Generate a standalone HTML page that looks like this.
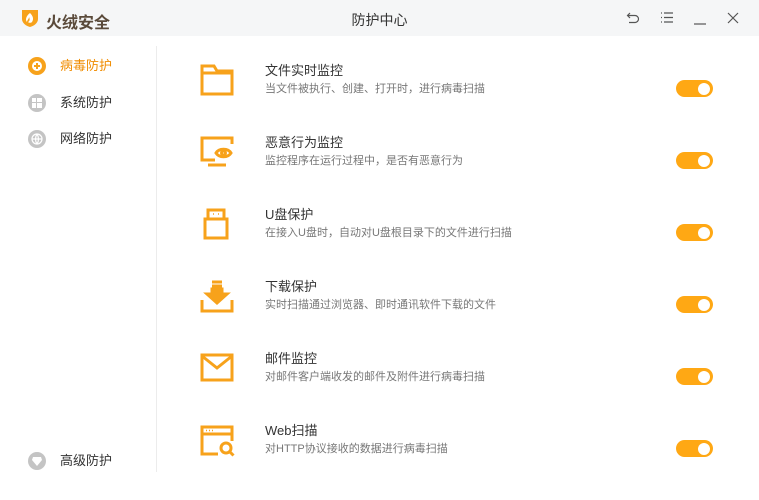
<!DOCTYPE html>
<html><head><meta charset="utf-8"><style>
*{margin:0;padding:0;box-sizing:border-box}
body{width:759px;height:500px;background:#fff;font-family:"Liberation Sans","Noto Sans CJK SC",sans-serif;position:relative;overflow:hidden;color:#333}
.top{position:absolute;left:0;top:0;width:759px;height:36px;background:#f5f6f7}
.logo{position:absolute;left:46px;top:9px;font-size:16px;font-weight:bold;color:#5a4a3a}
.title{position:absolute;left:0;width:759px;top:10px;text-align:center;font-size:14px;color:#333}
.ctl{position:absolute;top:10px}
.div{position:absolute;left:156px;top:46px;width:1px;height:426px;background:#ececec}
.nav{position:absolute;left:28px;font-size:13px;color:#333}
.nav .ic{position:absolute;left:0;top:0;width:18px;height:18px;border-radius:50%;background:#c4c4c4}
.nav span{position:absolute;left:32px;top:0;white-space:nowrap;line-height:18px}
.row{position:absolute;left:0;width:759px}
.row svg.i{position:absolute;left:198px;top:0}
.row .t{position:absolute;left:265px;top:-4px;font-size:13px;color:#333;white-space:nowrap}
.row .d{position:absolute;left:265px;top:16px;font-size:11px;color:#777;white-space:nowrap}
.tg{position:absolute;left:676px;top:16px;width:37px;height:17px;border-radius:9px;background:#ffa814}
.tg::after{content:"";position:absolute;right:3px;top:2.5px;width:12px;height:12px;border-radius:50%;background:#fff}
</style></head><body>
<div class="top">
<svg style="position:absolute;left:20px;top:8px" width="20" height="20" viewBox="0 0 20 20"><path d="M2 2h16v9c0 4-4 7-8 8-4-1-8-4-8-8z" fill="#f7a21b"/><path d="M10 5c3 3 4 6 2 9-1 1-3 1-4 0 2-1 2-3 1-5 0 2-2 3-2 5-2-2-1-6 3-9z" fill="#fff"/></svg>
<div class="logo">火绒安全</div>
<div class="title">防护中心</div>
<svg class="ctl" style="left:626px" width="14" height="16" viewBox="0 0 14 16" fill="none" stroke="#555" stroke-width="1.2"><path d="M4 3L1.5 5.5 4 8M1.5 5.5H9a3.5 3.5 0 010 7H3"/></svg>
<svg class="ctl" style="left:660px" width="14" height="16" viewBox="0 0 14 16" fill="none" stroke="#555" stroke-width="1.2"><path d="M1 3h1M4 3h9M1 7.5h1M4 7.5h9M1 12h1M4 12h9"/></svg>
<svg class="ctl" style="left:693px" width="14" height="16" viewBox="0 0 14 16" fill="none" stroke="#555" stroke-width="1.2"><path d="M1 14h12"/></svg>
<svg class="ctl" style="left:726px" width="14" height="16" viewBox="0 0 14 16" fill="none" stroke="#555" stroke-width="1.2"><path d="M2 3l10 10M12 3L2 13"/></svg>
</div>
<div class="div"></div>
<div class="nav" style="top:57px"><div class="ic" style="background:#f7a21b"></div><div style="position:absolute;left:4px;top:4px;width:10px;height:10px;border-radius:50%;background:#fff"></div><div style="position:absolute;left:6px;top:8.3px;width:6px;height:1.4px;background:#f7a21b"></div><div style="position:absolute;left:8.3px;top:6px;width:1.4px;height:6px;background:#f7a21b"></div><span style="color:#f08c00">病毒防护</span></div>
<div class="nav" style="top:94px"><div class="ic"></div><svg style="position:absolute;left:4px;top:4px" width="10" height="10"><rect x="0" y="0" width="4" height="4" fill="#fff"/><rect x="5" y="0" width="5" height="4" fill="#fff"/><rect x="0" y="5" width="4" height="5" fill="#fff"/><rect x="5" y="5" width="5" height="5" fill="#fff"/></svg><span>系统防护</span></div>
<div class="nav" style="top:130px"><div class="ic"></div><svg style="position:absolute;left:3px;top:3px" width="12" height="12" fill="none" stroke="#fff" stroke-width="1.2"><circle cx="6" cy="6" r="5"/><path d="M1 6h10M6 1c-2 3-2 7 0 10M6 1c2 3 2 7 0 10"/></svg><span>网络防护</span></div>
<div class="nav" style="top:452px"><div class="ic"></div><svg style="position:absolute;left:4px;top:5px" width="10" height="9"><path d="M1 0h8l1 3-5 6-5-6z" fill="#fff"/></svg><span>高级防护</span></div>

<div class="row" style="top:64px">
<svg class="i" width="38" height="32" viewBox="0 0 38 32" fill="none" stroke="#f7a21b" stroke-width="3"><path d="M4 2h12l3 5h15v23H4z M4 9h30"/></svg>
<div class="t">文件实时监控</div><div class="d">当文件被执行、创建、打开时，进行病毒扫描</div><div class="tg"></div></div>
<div class="row" style="top:136px">
<svg class="i" width="38" height="32" viewBox="0 0 38 32" fill="none" stroke="#f7a21b" stroke-width="3"><path d="M34 8V2H4v22h13M10 29h18"/><path d="M18 17c3-5 12-5 15 0-3 5-12 5-15 0z"/><circle cx="25.5" cy="17" r="2"/></svg>
<div class="t">恶意行为监控</div><div class="d">监控程序在运行过程中，是否有恶意行为</div><div class="tg"></div></div>
<div class="row" style="top:208px">
<svg class="i" width="38" height="32" viewBox="0 0 38 32" fill="none" stroke="#f7a21b" stroke-width="3"><path d="M10 2h16v9H10zM7 11h22v19H7z"/><path d="M15 6h1M20 6h1" stroke-width="1.5"/></svg>
<div class="t">U盘保护</div><div class="d">在接入U盘时，自动对U盘根目录下的文件进行扫描</div><div class="tg"></div></div>
<div class="row" style="top:280px">
<svg class="i" width="38" height="34" viewBox="0 0 38 34" fill="none" stroke="#f7a21b" stroke-width="3"><path d="M14 2h10M14 6h10M4 20v11h30V20"/><path d="M14 9h10v5h5l-10 9-10-9h5z" fill="#f7a21b"/></svg>
<div class="t">下载保护</div><div class="d">实时扫描通过浏览器、即时通讯软件下载的文件</div><div class="tg"></div></div>
<div class="row" style="top:352px">
<svg class="i" width="38" height="32" viewBox="0 0 38 32" fill="none" stroke="#f7a21b" stroke-width="3"><path d="M4 3h30v25H4zM4 4l15 12 15-12"/></svg>
<div class="t">邮件监控</div><div class="d">对邮件客户端收发的邮件及附件进行病毒扫描</div><div class="tg"></div></div>
<div class="row" style="top:424px">
<svg class="i" width="38" height="34" viewBox="0 0 38 34" fill="none" stroke="#f7a21b" stroke-width="3"><path d="M20 30H4V3h30v14M4 10h30"/><path d="M8 6.5h1M11 6.5h1M14 6.5h1" stroke-width="1.5"/><circle cx="28" cy="24" r="5"/><path d="M31.5 27.5l4 4"/></svg>
<div class="t">Web扫描</div><div class="d">对HTTP协议接收的数据进行病毒扫描</div><div class="tg"></div></div>
</body></html>
